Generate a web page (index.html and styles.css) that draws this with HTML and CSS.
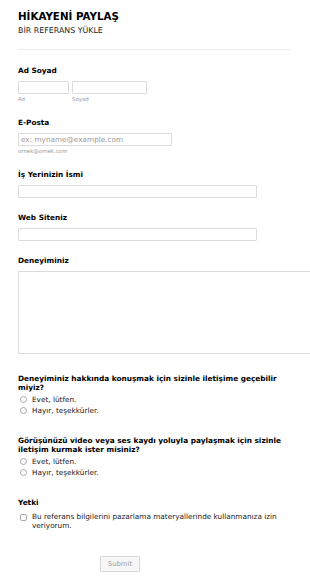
FILE: index.html
```html
<!DOCTYPE html>
<html lang="tr">
<head>
  <meta charset="UTF-8" />
  <meta name="viewport" content="width=device-width, initial-scale=1.0"/>
  <title>Hikayeni Paylaş</title>
  <link rel="stylesheet" href="styles.css">
</head>
<body>
  <form class="form">
    <header class="form-header">
      <h1 class="title">HİKAYENİ PAYLAŞ</h1>
      <p class="subtitle">BİR REFERANS YÜKLE</p>
    </header>

    <div class="field">
      <label class="label">Ad Soyad</label>
      <div class="name-row">
        <div class="name-col">
          <input class="input input-first" type="text">
          <span class="sublabel">Ad</span>
        </div>
        <div class="name-col">
          <input class="input input-last" type="text">
          <span class="sublabel">Soyad</span>
        </div>
      </div>
    </div>

    <div class="field">
      <label class="label">E-Posta</label>
      <input class="input input-email" type="email" placeholder="ex: myname@example.com">
      <span class="sublabel">ornek@ornek.com</span>
    </div>

    <div class="field">
      <label class="label">İş Yerinizin İsmi</label>
      <input class="input input-wide" type="text">
    </div>

    <div class="field">
      <label class="label">Web Siteniz</label>
      <input class="input input-wide" type="text">
    </div>

    <div class="field">
      <label class="label">Deneyiminiz</label>
      <textarea class="textarea"></textarea>
    </div>

    <div class="field field-choice">
      <label class="label label-long">Deneyiminiz hakkında konuşmak için sizinle iletişime geçebilir miyiz?</label>
      <label class="option"><input type="radio" name="q1"> Evet, lütfen.</label>
      <label class="option"><input type="radio" name="q1"> Hayır, teşekkürler.</label>
    </div>

    <div class="field field-choice">
      <label class="label label-long">Görüşünüzü video veya ses kaydı yoluyla paylaşmak için sizinle iletişim kurmak ister misiniz?</label>
      <label class="option"><input type="radio" name="q2"> Evet, lütfen.</label>
      <label class="option"><input type="radio" name="q2"> Hayır, teşekkürler.</label>
    </div>

    <div class="field field-choice">
      <label class="label">Yetki</label>
      <label class="option option-check"><input type="checkbox"> <span>Bu referans bilgilerini pazarlama materyallerinde kullanmanıza izin veriyorum.</span></label>
    </div>

    <div class="actions">
      <button type="button" class="btn-submit">Submit</button>
    </div>
  </form>
</body>
</html>
```

FILE: styles.css
```css
body {
  margin: 0;
  background-color: #fff;
  font-family: "DejaVu Sans", Verdana, sans-serif;
  color: #111;
  overflow-x: hidden;
}

.form {
  width: 273px;
  padding: 10px 0 0 18px;
}

.form-header {
  padding-bottom: 13px;
  border-bottom: 1px solid #eee;
}

.title {
  margin: 0;
  font-size: 10.3px;
  line-height: 13px;
  font-weight: bold;
  color: #000;
}

.subtitle {
  margin: 3px 0 0;
  font-size: 7.9px;
  line-height: 10px;
  color: #222;
}

.field {
  display: flex;
  flex-direction: column;
  align-items: flex-start;
  margin-top: 15px;
}

.form-header + .field {
  margin-top: 16px;
}

.label {
  display: block;
  font-size: 7.35px;
  font-weight: bold;
  line-height: 10px;
  margin-bottom: 5px;
  color: #000;
}

.label-long {
  line-height: 9px;
  margin-bottom: 2px;
  width: 275px;
}

.input {
  box-sizing: border-box;
  height: 13px;
  border: 1px solid #dcdcdc;
  border-radius: 1px;
  padding: 0 2px;
  margin: 0;
  font-family: inherit;
  font-size: 7.3px;
}

.input::placeholder {
  color: #9a9a9a;
}

.name-row {
  display: flex;
  gap: 3px;
}

.name-col {
  display: flex;
  flex-direction: column;
}

.input-first { width: 51px; }
.input-last { width: 75px; }
.input-email { width: 154px; }
.input-wide { width: 239px; }

.sublabel {
  font-size: 5.4px;
  line-height: 8px;
  margin-top: 1px;
  color: #999;
}

.textarea {
  box-sizing: border-box;
  width: 296px;
  height: 83px;
  margin: 0;
  border: 1px solid #dcdcdc;
  resize: none;
}

.field-choice {
  margin-top: 20px;
}

.option {
  display: flex;
  align-items: center;
  gap: 5px;
  font-size: 7.3px;
  line-height: 11px;
  color: #222;
  padding-left: 2px;
}

.option input {
  appearance: none;
  margin: 0;
  width: 7px;
  height: 7px;
  border: 1px solid #a8a8a8;
  border-radius: 50%;
  box-sizing: border-box;
  background: #fff;
}

.option-check {
  align-items: flex-start;
  line-height: 8.5px;
  width: 265px;
}

.option-check input {
  border-radius: 2px;
  margin-top: 1px;
  flex-shrink: 0;
}

.actions {
  display: flex;
  padding: 26px 0 0 82px;
}

.btn-submit {
  width: 40px;
  height: 16px;
  padding: 0;
  border: 1px solid #d6d6d6;
  border-radius: 2px;
  background-color: #f7f7f7;
  color: #999;
  font-family: inherit;
  font-size: 6.8px;
}
```
